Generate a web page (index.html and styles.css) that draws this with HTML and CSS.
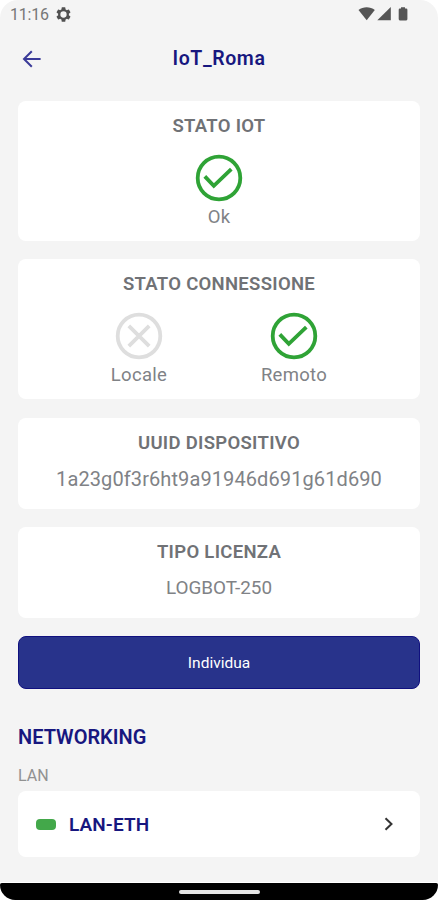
FILE: index.html
```html
<!DOCTYPE html>
<html lang="it">
<head>
<meta charset="utf-8">
<title>IoT_Roma</title>
<link rel="stylesheet" href="styles.css">
</head>
<body>
<svg class="defs" width="0" height="0" aria-hidden="true">
  <symbol id="ok" viewBox="0 0 48 48">
    <circle cx="24" cy="24" r="21.3" fill="none" stroke="currentColor" stroke-width="3.8"/>
    <path d="M9.800 22.400 18.800 31.900 36.300 15.200" fill="none" stroke="currentColor" stroke-width="3.8"/>
  </symbol>
  <symbol id="off" viewBox="0 0 48 48">
    <circle cx="24" cy="24" r="21.3" fill="none" stroke="currentColor" stroke-width="3.8"/>
    <path d="M13.8 13.8 34.2 34.2M34.2 13.8 13.8 34.2" fill="none" stroke="currentColor" stroke-width="3.8"/>
  </symbol>
</svg>
<div class="screen">
  <header class="status">
    <span class="time">11:16</span>
    <svg class="gear" width="15" height="15" viewBox="2 2 20 20"><path fill="#505050" d="M19.14 12.94c.04-.3.06-.61.06-.94 0-.32-.02-.64-.07-.94l2.03-1.58a.49.49 0 0 0 .12-.61l-1.92-3.32a.49.49 0 0 0-.59-.22l-2.39.96c-.5-.38-1.03-.7-1.62-.94l-.36-2.54a.48.48 0 0 0-.48-.41h-3.84a.47.47 0 0 0-.47.41l-.36 2.54c-.59.24-1.13.57-1.62.94l-2.39-.96a.48.48 0 0 0-.59.22L2.74 8.87a.47.47 0 0 0 .12.61l2.03 1.58c-.05.3-.09.63-.09.94s.02.64.07.94l-2.03 1.58a.49.49 0 0 0-.12.61l1.92 3.32c.12.22.37.29.59.22l2.39-.96c.5.38 1.03.7 1.62.94l.36 2.54c.05.24.24.41.48.41h3.84c.24 0 .44-.17.47-.41l.36-2.54c.59-.24 1.13-.56 1.62-.94l2.39.96c.22.08.47 0 .59-.22l1.92-3.32a.47.47 0 0 0-.12-.61zM12 16.2a4.2 4.2 0 1 1 0-8.4 4.2 4.2 0 0 1 0 8.400z"/></svg>
    <svg class="signals" width="50" height="16" viewBox="0 0 50 16" fill="#555"><path d="M.5 4C5 .3 12.300.3 16.800 4L8.700 14.300z"/><path d="M32.800 1V14.300H19.300z"/><path d="M43 1.200h4v1.300h1.200q1.200 0 1.200 1.200v9.400q0 1.300-1.200 1.300h-6.300q-1.200 0-1.200-1.300V3.700q0-1.200 1.200-1.200H43z"/></svg>
  </header>
  <nav class="bar">
    <svg class="back" width="20" height="18" viewBox="0 0 20 18"><path d="M18.600 9H2M9.800 1.200 2 9l7.800 7.800" fill="none" stroke="#3a3a98" stroke-width="2"/></svg>
    <h1 class="title">IoT_Roma</h1>
  </nav>
  <main class="content">
    <section class="card tall">
      <h2 class="label">STATO IOT</h2>
      <div class="states">
        <div class="state"><svg class="icon good"><use href="#ok"/></svg><span>Ok</span></div>
      </div>
    </section>
    <section class="card tall">
      <h2 class="label">STATO CONNESSIONE</h2>
      <div class="states pair">
        <div class="state"><svg class="icon muted"><use href="#off"/></svg><span>Locale</span></div>
        <div class="state"><svg class="icon good"><use href="#ok"/></svg><span>Remoto</span></div>
      </div>
    </section>
    <section class="card short">
      <h2 class="label">UUID DISPOSITIVO</h2>
      <p class="value uuid">1a23g0f3r6ht9a91946d691g61d690</p>
    </section>
    <section class="card short">
      <h2 class="label">TIPO LICENZA</h2>
      <p class="value license">LOGBOT-250</p>
    </section>
    <button class="action">Individua</button>
    <h2 class="group">NETWORKING</h2>
    <p class="sub">LAN</p>
    <div class="row">
      <span class="led"></span>
      <span class="name">LAN-ETH</span>
      <svg class="chevron" width="10" height="14" viewBox="0 0 10 14"><path d="M1.500 1.200 7.500 7l-6 5.800" fill="none" stroke="#333" stroke-width="2"/></svg>
    </div>
  </main>
</div>
<footer class="home"><span class="pill"></span></footer>
</body>
</html>
```
FILE: styles.css
```css
* { box-sizing: border-box; margin: 0; padding: 0; }
body {
  width: 438px;
  height: 900px;
  overflow: hidden;
  background: #fff;
  font-family: Roboto, sans-serif;
  color: #808286;
}
.defs { display: none; }
.screen { height: 882px; background: #f4f4f4; border-radius: 18px 18px 0 0; }
.status { display: flex; align-items: center; height: 30px; padding: 0 30px 2px 10px; }
.time { width: 46px; font-size: 16px; letter-spacing: -0.2px; color: #777; }
.signals { margin-left: auto; }
.bar { display: grid; grid-template-columns: 20px 1fr 20px; align-items: center; height: 57px; padding: 0 22px; }
.title { text-align: center; font-size: 19.500px; font-weight: 600; letter-spacing: 0.6px; color: #17177f; }
.content { padding: 14px 18px 0; }
.card { margin-bottom: 18px; background: #fff; border-radius: 8px; text-align: center; }
.tall { height: 140px; padding-top: 15px; }
.short { height: 91px; padding-top: 15px; }
.tall + .short { margin-top: 19px; }
.label { font-size: 18.500px; font-weight: 600; line-height: 20px; letter-spacing: 0.3px; color: #707276; }
.states { display: flex; justify-content: center; padding-top: 18px; }
.pair { padding-right: 5px; }
.state { display: flex; flex-direction: column; align-items: center; width: 155px; font-size: 18.500px; line-height: 22px; letter-spacing: 0.3px; }
.icon { width: 48px; height: 48px; margin-bottom: 4px; }
.good { color: #2fa336; }
.muted { color: #dedede; }
.value { line-height: 24px; }
.uuid { padding-top: 14px; font-size: 20px; letter-spacing: 0.1px; }
.license { padding-top: 14px; font-size: 18.900px; }
.action { display: block; width: 402px; height: 53px; border: 1px solid #10107f; border-radius: 8px; background: #28338b; color: #fff; font: 400 15.500px Roboto, sans-serif; }
.group { padding-top: 36px; font-size: 20px; line-height: 24px; font-weight: 600; color: #17177f; }
.sub { padding-top: 17px; font-size: 16px; line-height: 20px; margin-bottom: 5px; color: #919191; }
.row { display: flex; align-items: center; height: 66px; padding: 0 26px 0 18px; border-radius: 8px; background: #fff; }
.led { width: 20px; height: 11px; margin-right: 13px; border-radius: 4px; background: #43a84a; }
.name { font-size: 19px; font-weight: 600; letter-spacing: 0.1px; color: #17177f; }
.chevron { margin-left: auto; }
.home { display: flex; justify-content: center; align-items: center; height: 17px; margin-top: 1px; border-radius: 2px 2px 17px 17px; background: #000; }
.pill { width: 81px; height: 4px; border-radius: 2px; background: #e4e4e4; }
```
